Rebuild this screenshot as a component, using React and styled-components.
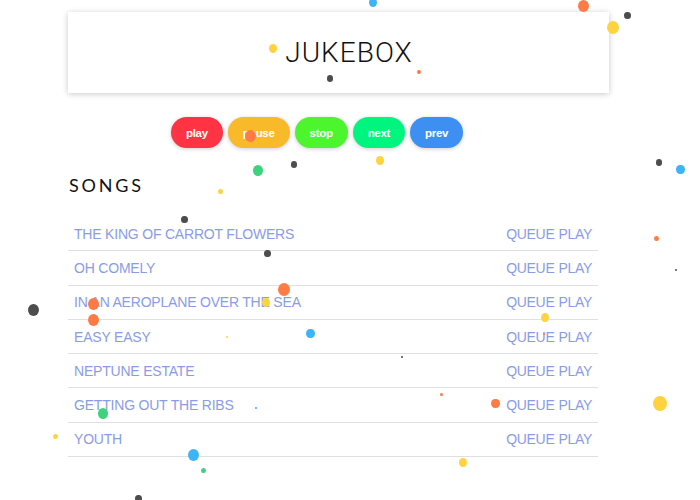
import React from 'react';
import styled, { createGlobalStyle } from 'styled-components';

const songs = [
    'The King of Carrot Flowers',
    'Oh Comely',
    'In an Aeroplane Over the Sea',
    'Easy Easy',
    'Neptune Estate',
    'Getting Out the Ribs',
    'Youth',
];

const controls = [
    { label: 'play', color: '#ff3344' },
    { label: 'pause', color: '#f8b92a' },
    { label: 'stop', color: '#4cf52e' },
    { label: 'next', color: '#00f57f' },
    { label: 'prev', color: '#3d8ff2' },
];

// confetti: x, y, size, color
const confetti = [
    [373, 2, 8, '#3db4f7'], [583, 5, 11, '#ff7b45'], [627, 15, 7, '#4d4d4d'],
    [613, 27, 12, '#ffd23f'], [273, 48, 8, '#ffd23f'], [330, 78, 6, '#4d4d4d'],
    [419, 72, 4, '#ff7b45'], [250, 135, 11, '#ff7b45'], [258, 170, 10, '#3dd27c'],
    [294, 164, 6, '#4d4d4d'], [380, 160, 8, '#ffd23f'], [220, 191, 5, '#ffd23f'],
    [184, 219, 7, '#4d4d4d'], [659, 162, 6, '#4d4d4d'], [680, 169, 9, '#3db4f7'],
    [656, 238, 5, '#ff7b45'], [676, 270, 2, '#4d4d4d'], [267, 253, 7, '#4d4d4d'],
    [284, 289, 12, '#ff7b45'], [93, 303, 11, '#ff7b45'], [93, 319, 11, '#ff7b45'],
    [33, 309, 11, '#4d4d4d'], [266, 302, 8, '#ffd23f'], [310, 333, 9, '#3db4f7'],
    [227, 337, 2, '#ffd23f'], [545, 317, 8, '#ffd23f'], [544, 334, 2, '#ff7b45'],
    [402, 357, 2, '#4d4d4d'], [441, 394, 3, '#ff7b45'], [495, 403, 9, '#ff7b45'],
    [660, 403, 14, '#ffd23f'], [256, 408, 2, '#3db4f7'], [103, 413, 10, '#3dd27c'],
    [55, 436, 5, '#ffd23f'], [193, 454, 11, '#3db4f7'], [203, 470, 5, '#3dd27c'],
    [463, 462, 8, '#ffd23f'], [138, 498, 7, '#4d4d4d'],
];

function App() {
    return (
        <>
            <GlobalStyle />
            <Page>
                <Header>
                    <Title>JUKEBOX</Title>
                </Header>
                <Controls>
                    {controls.map((c) => (
                        <ControlButton key={c.label} $color={c.color}>
                            {c.label}
                        </ControlButton>
                    ))}
                </Controls>
                <SectionTitle>SONGS</SectionTitle>
                <SongList>
                    {songs.map((song) => (
                        <SongRow key={song}>
                            <SongName>{song}</SongName>
                            <Actions>
                                <Action>queue</Action>
                                <Action>play</Action>
                            </Actions>
                        </SongRow>
                    ))}
                </SongList>
            </Page>
            <Confetti>
                {confetti.map(([x, y, d, color], i) => (
                    <Dot
                        key={i}
                        $color={color}
                        style={{ left: x - d / 2, top: y - d / 2, width: d, height: d * 1.1 }}
                    />
                ))}
            </Confetti>
        </>
    );
}

const GlobalStyle = createGlobalStyle`
    html, body {
        margin: 0;
        padding: 0;
        background: #ffffff;
        font-family: "Liberation Sans", Arial, sans-serif;
        overflow: hidden;
    }
`;

const Page = styled.div`
    width: 541px;
    padding: 12px 0 0 68px;
`;

const Header = styled.header`
    height: 81px;
    display: flex;
    align-items: center;
    justify-content: center;
    background: #ffffff;
    box-shadow: 0px 1px 6px rgba(0, 0, 0, 0.22);
`;

const Title = styled.h1`
    margin: 0;
    font-family: Roboto, "Liberation Sans", sans-serif;
    font-weight: 300;
    font-size: 28px;
    letter-spacing: 1px;
    color: #111111;
    padding-left: 21px;
`;

const Controls = styled.div`
    display: flex;
    gap: 5px;
    margin: 24px 0 0 103px;
`;

const ControlButton = styled.button`
    height: 31px;
    padding: 0 15px;
    border: none;
    border-radius: 16px;
    background: ${(p) => p.$color};
    color: #ffffff;
    font-family: "Liberation Sans", Arial, sans-serif;
    font-weight: 700;
    font-size: 11.5px;
    letter-spacing: -0.3px;
    box-shadow: 0px 1px 4px rgba(0, 0, 0, 0.2);
`;

const SectionTitle = styled.h2`
    margin: 26px 0 0 1px;
    font-family: Lato, "Liberation Sans", sans-serif;
    font-weight: 400;
    font-size: 18px;
    letter-spacing: 2.8px;
    color: #111111;
`;

const SongList = styled.ul`
    list-style: none;
    margin: 21px 0 0;
    padding: 0;
    width: 530px;
`;

const SongRow = styled.li`
    display: flex;
    align-items: center;
    justify-content: space-between;
    height: 33.3px;
    padding: 0 6px;
    border-bottom: 1px solid #e0e0e0;
`;

const SongName = styled.span`
    font-size: 14px;
    letter-spacing: -0.2px;
    text-transform: uppercase;
    color: #8a9ce6;
`;

const Actions = styled.div`
    display: flex;
    gap: 4px;
`;

const Action = styled.span`
    font-size: 14px;
    letter-spacing: -0.3px;
    text-transform: uppercase;
    color: #8a9ce6;
`;

const Confetti = styled.div`
    position: fixed;
    inset: 0;
    pointer-events: none;
`;

const Dot = styled.span`
    position: absolute;
    border-radius: 50%;
    background: ${(p) => p.$color};
`;

export default App;
